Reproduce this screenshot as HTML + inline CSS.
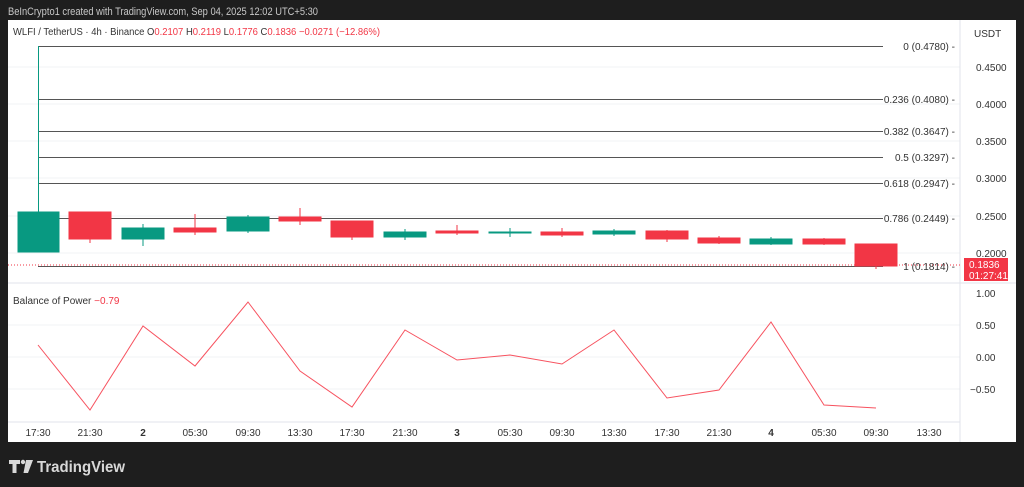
<!DOCTYPE html><html><head><style>
body{margin:0;width:1024px;height:487px;background:#1e1e1e;font-family:"Liberation Sans",sans-serif;overflow:hidden;position:relative}
</style></head><body>
<div style="position:absolute;left:8px;top:20px;width:1008px;height:422px;background:#fff"></div>
<svg style="position:absolute;left:0;top:0" width="1024" height="487" font-family="Liberation Sans,sans-serif">
<text x="8" y="15" font-size="11" fill="#c8c8c8" textLength="310" lengthAdjust="spacingAndGlyphs">BeInCrypto1 created with TradingView.com, Sep 04, 2025 12:02 UTC+5:30</text>
<g stroke="#f2f3f5" stroke-width="1">
<line x1="8" y1="67" x2="960" y2="67"/><line x1="8" y1="104" x2="960" y2="104"/><line x1="8" y1="141" x2="960" y2="141"/><line x1="8" y1="178" x2="960" y2="178"/><line x1="8" y1="216" x2="960" y2="216"/><line x1="8" y1="253" x2="960" y2="253"/>
<line x1="8" y1="325" x2="960" y2="325"/><line x1="8" y1="357" x2="960" y2="357"/><line x1="8" y1="389" x2="960" y2="389"/>
</g>
<line x1="8" y1="283" x2="1016" y2="283" stroke="#e0e3eb"/>
<line x1="960" y1="20" x2="960" y2="442" stroke="#e0e3eb"/>
<line x1="8" y1="422" x2="960" y2="422" stroke="#e0e3eb"/>
<g stroke="#555" stroke-width="1">
<line x1="38" y1="46.5" x2="883" y2="46.5"/><line x1="38" y1="99.5" x2="883" y2="99.5"/><line x1="38" y1="131.5" x2="883" y2="131.5"/><line x1="38" y1="157.5" x2="883" y2="157.5"/><line x1="38" y1="183.5" x2="883" y2="183.5"/><line x1="38" y1="218.5" x2="883" y2="218.5"/><line x1="38" y1="266.5" x2="883" y2="266.5"/>
</g>
<line x1="8" y1="265" x2="960" y2="265" stroke="#f23645" stroke-dasharray="1 2" stroke-width="1"/>
<g font-size="10" fill="#333" text-anchor="end">
<text x="955" y="50">0 (0.4780) -</text><text x="955" y="103">0.236 (0.4080) -</text><text x="955" y="135">0.382 (0.3647) -</text><text x="955" y="161">0.5 (0.3297) -</text><text x="955" y="187">0.618 (0.2947) -</text><text x="955" y="222">0.786 (0.2449) -</text><text x="955" y="270">1 (0.1814) -</text>
</g>
<line x1="38.5" y1="46" x2="38.5" y2="212" stroke="#089981"/>
<g stroke="#089981" fill="#089981">
<rect x="18" y="212" width="41" height="40"/>
<line x1="143" y1="224" x2="143" y2="246"/><rect x="122" y="228" width="42" height="11"/>
<line x1="248" y1="215" x2="248" y2="233"/><rect x="227" y="217" width="42" height="14"/>
<line x1="405" y1="229" x2="405" y2="240"/><rect x="384" y="232" width="42" height="5"/>
<line x1="510" y1="228" x2="510" y2="237"/><rect x="489" y="232" width="42" height="1"/>
<line x1="614" y1="229" x2="614" y2="236"/><rect x="593" y="231" width="42" height="3"/>
<line x1="771" y1="237" x2="771" y2="245"/><rect x="750" y="239" width="42" height="5"/>
</g>
<g stroke="#f23645" fill="#f23645">
<line x1="90" y1="212" x2="90" y2="243"/><rect x="69" y="212" width="42" height="27"/>
<line x1="195" y1="214" x2="195" y2="235"/><rect x="174" y="228" width="42" height="4"/>
<line x1="300" y1="208" x2="300" y2="225"/><rect x="279" y="217" width="42" height="4"/>
<line x1="352" y1="221" x2="352" y2="240"/><rect x="331" y="221" width="42" height="16"/>
<line x1="457" y1="225" x2="457" y2="235"/><rect x="436" y="231" width="42" height="2"/>
<line x1="562" y1="228" x2="562" y2="237"/><rect x="541" y="232" width="42" height="3"/>
<line x1="667" y1="230" x2="667" y2="242"/><rect x="646" y="231" width="42" height="8"/>
<line x1="719" y1="236" x2="719" y2="244"/><rect x="698" y="238" width="42" height="5"/>
<line x1="824" y1="238" x2="824" y2="245"/><rect x="803" y="239" width="42" height="5"/>
<line x1="876" y1="244" x2="876" y2="269"/><rect x="855" y="244" width="42" height="22"/>
</g>
<rect x="964" y="258" width="44" height="23" fill="#f23645"/>
<text x="969" y="268" font-size="10" fill="#fff">0.1836</text><text x="969" y="279" font-size="10" fill="#fff">01:27:41</text>
<g font-size="10" fill="#333">
<text x="974" y="37">USDT</text><text x="976" y="71">0.4500</text><text x="976" y="108">0.4000</text><text x="976" y="145">0.3500</text><text x="976" y="182">0.3000</text><text x="976" y="220">0.2500</text><text x="976" y="257">0.2000</text>
<text x="976" y="297">1.00</text><text x="976" y="329">0.50</text><text x="976" y="361">0.00</text><text x="970" y="393">−0.50</text>
</g>
<polyline fill="none" stroke="#f7525f" stroke-width="1" points="38,345 90,410 143,326 195,366 248,302 300,371 352,407 405,330 457,360 510,355 562,364 614,330 667,398 719,390 771,322 824,405 876,408"/>
<g font-size="10" fill="#333" text-anchor="middle">
<text x="38" y="436">17:30</text><text x="90" y="436">21:30</text><text x="143" y="436" font-weight="bold">2</text><text x="195" y="436">05:30</text><text x="248" y="436">09:30</text><text x="300" y="436">13:30</text><text x="352" y="436">17:30</text><text x="405" y="436">21:30</text><text x="457" y="436" font-weight="bold">3</text><text x="510" y="436">05:30</text><text x="562" y="436">09:30</text><text x="614" y="436">13:30</text><text x="667" y="436">17:30</text><text x="719" y="436">21:30</text><text x="771" y="436" font-weight="bold">4</text><text x="824" y="436">05:30</text><text x="876" y="436">09:30</text><text x="929" y="436">13:30</text>
</g>
<text x="13" y="35" font-size="10" fill="#333" textLength="367" lengthAdjust="spacingAndGlyphs">WLFI / TetherUS · 4h · Binance  O<tspan fill="#f23645">0.2107</tspan>  H<tspan fill="#f23645">0.2119</tspan>  L<tspan fill="#f23645">0.1776</tspan>  C<tspan fill="#f23645">0.1836  −0.0271 (−12.86%)</tspan></text>
<text x="13" y="304" font-size="10" fill="#333">Balance of Power <tspan fill="#f23645">−0.79</tspan></text>
<g fill="#d8d8d8">
<path d="M9 460h11v4h-3.5v9h-4v-9H9z"/><circle cx="23" cy="462" r="2.2"/><path d="M26 460h7l-5 13h-4.5z"/>
</g>
<text x="37" y="472" font-size="16" font-weight="bold" fill="#d8d8d8" textLength="88" lengthAdjust="spacingAndGlyphs">TradingView</text>
</svg>
</body></html>
